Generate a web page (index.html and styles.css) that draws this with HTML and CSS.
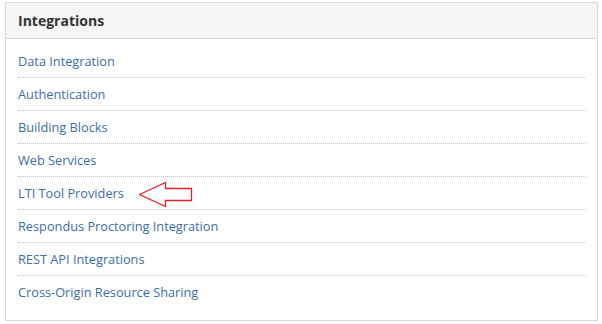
FILE: index.html
```html
<!DOCTYPE html>
<html>
<head>
	<title>Integrations</title>
	<meta charset="utf-8">
	<link rel="stylesheet" href="styles.css">
</head>
<body>

	<div class="panel">
		<div class="panel-head">Integrations</div>
		<ul class="links">
			<li><a href="#">Data Integration</a></li>
			<li><a href="#">Authentication</a></li>
			<li><a href="#">Building Blocks</a></li>
			<li><a href="#">Web Services</a></li>
			<li class="marked">
				<a href="#">LTI Tool Providers</a>
				<svg class="pointer" width="54" height="26" viewBox="0 0 54 26">
					<polygon points="0.5,12.5 26.5,0.5 26.5,6.5 52.5,6.5 52.5,18.5 26.5,18.5 26.5,24.5" fill="none" stroke="#e8202a" stroke-width="1.3"/>
				</svg>
			</li>
			<li><a href="#">Respondus Proctoring Integration</a></li>
			<li><a href="#">REST API Integrations</a></li>
			<li><a href="#">Cross-Origin Resource Sharing</a></li>
		</ul>
	</div>

</body>
</html>
```

FILE: styles.css
```css
body{
	margin: 0;
	background: #fff;
	font-family: "Open Sans", "Liberation Sans", sans-serif;
}
.panel{
	width: 591px;
	margin: 2px 0 0 5px;
	border: 1px solid #d9d9d9;
}
.panel-head{
	height: 35px;
	line-height: 35px;
	padding-left: 12px;
	background: #f5f5f5;
	border-bottom: 1px solid #d5d5d5;
	font-size: 14px;
	font-weight: bold;
	color: #333;
}
.links{
	list-style: none;
	margin: 0 11px 0 12px;
	padding: 6px 0 12px;
}
.links li{
	height: 32px;
	line-height: 32px;
	border-bottom: 1px dotted #c4c4c4;
	font-size: 12.75px;
}
.links li:last-child{
	border-bottom: none;
}
.links a{
	color: #3b6ea6;
	text-decoration: none;
}
/* the red arrow drawn over the list */
.marked{
	position: relative;
}
.pointer{
	position: absolute;
	left: 121px;
	top: 5px;
}
```
